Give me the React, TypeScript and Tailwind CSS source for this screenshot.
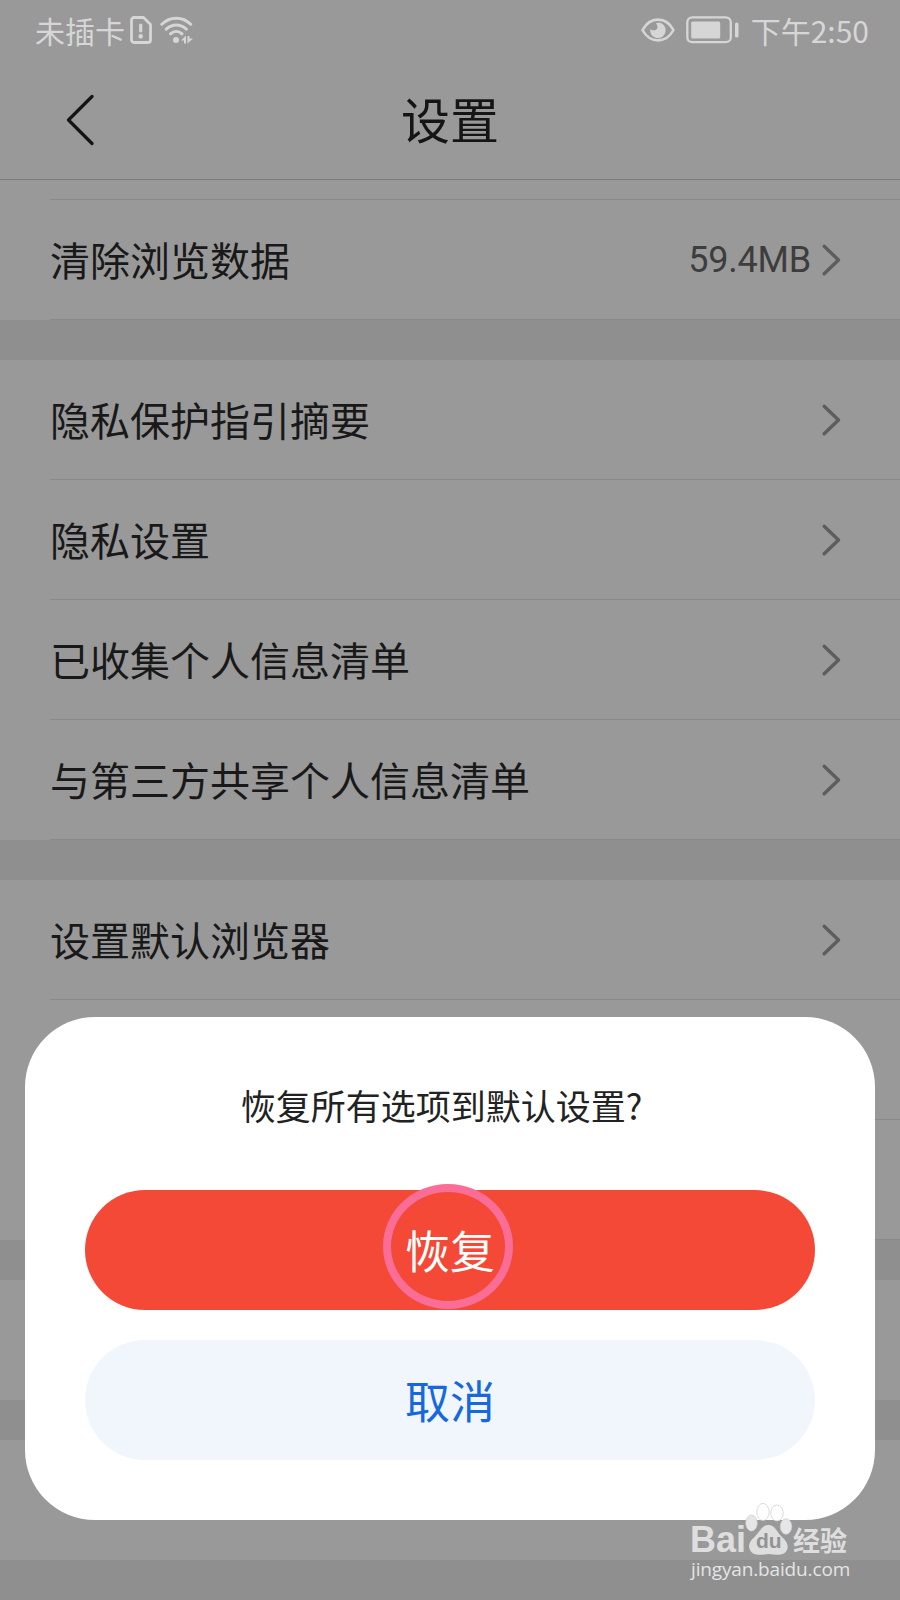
import React from "react";

const FONT = "font-['Noto_Sans_CJK_SC',sans-serif]";

function Chevron() {
  return (
    <svg className="h-8 w-5 shrink-0" viewBox="0 0 20 32" fill="none" stroke="#5d5d5d" strokeWidth="3.4" strokeLinecap="round" strokeLinejoin="round">
      <path d="M3.200 2.200 17.500 16 3.200 29.800" />
    </svg>
  );
}

function Row({ label, value, line = true }: { label?: string; value?: string; line?: boolean }) {
  return (
    <div className="flex h-[120px] bg-[#999999] pl-[50px]">
      <div className={line ? "flex flex-1 items-center justify-between border-b border-[#898989] pr-[59px]" : "flex flex-1 items-center justify-between pr-[59px]"}>
        <span className="pb-[2px] text-[40px] leading-[60px] text-[#191919]">{label}</span>
        {label && (
          <span className="flex items-center gap-[10px]">
            {value && <span className="pt-px font-['Roboto'] text-[36px] leading-[44px] tracking-[-0.2px] text-[#3d3d3d]">{value}</span>}
            <Chevron />
          </span>
        )}
      </div>
    </div>
  );
}

function Gap() {
  return <div className="h-10 bg-[#8f8f8f]" />;
}

function StatusBar() {
  return (
    <div className="flex h-[60px] items-center justify-between pl-[35px] pr-[31px] text-[30px] leading-[44px] text-[#d6d6d6]">
      <div className="flex items-center">
        <span className="w-[90px] whitespace-nowrap">未插卡</span>
        <svg className="ml-[5px] h-7 w-[22px]" viewBox="0 0 22 28" fill="none" stroke="currentColor" strokeWidth="2.8" strokeLinecap="round" strokeLinejoin="round">
          <path d="M4 1.500h9.500l7 7V24a2.500 2.500 0 0 1-2.500 2.500H4A2.500 2.500 0 0 1 1.500 24V4A2.500 2.500 0 0 1 4 1.500Z" />
          <path d="M10.700 9v6" strokeWidth="3.200" />
          <path d="M10.700 20.300v.1" strokeWidth="4.400" />
        </svg>
        <svg className="ml-2 h-7 w-[34px]" viewBox="0 0 34 28" fill="none" stroke="currentColor" strokeWidth="3" strokeLinecap="round">
          <path d="M1.800 8.200C10 .2 22.500 .2 30.700 8.200M6.300 13.200c6-5.500 14-5.500 20 0M10.500 17.800c3.500-3.200 8-3.200 11.500 0" />
          <circle cx="16" cy="24" r="3" fill="currentColor" stroke="none" />
          <path d="M21 24.500 26 19.500v8h-2v-3ZM27.500 20h2v2.500h3.500L27.500 27.500Z" fill="currentColor" stroke="none" />
        </svg>
      </div>
      <div className="flex items-center">
        <svg className="h-6 w-[34px]" viewBox="0 0 34 24" fill="none">
          <path d="M1.500 12C9-1.800 25-1.800 32.500 12 25 25.800 9 25.800 1.500 12Z" stroke="currentColor" strokeWidth="2.600" strokeLinejoin="round" />
          <path d="M17.500 4.500a7.800 7.800 0 1 1-8.300 6.500c1.800 2.200 6.800 1.800 7.300-1.500.2-1.800-.5-3-1.800-4Z" fill="currentColor" />
        </svg>
        <svg className="ml-[11px] h-7 w-[53px]" viewBox="0 0 53 28">
          <rect x="1.300" y="1.300" width="43.500" height="24.900" rx="5" fill="none" stroke="currentColor" strokeWidth="2.300" />
          <rect x="5.200" y="5.500" width="29" height="17" rx="1.500" fill="currentColor" />
          <rect x="49" y="6.500" width="3.500" height="15" rx="1.500" fill="currentColor" />
        </svg>
        <span className="ml-3 whitespace-nowrap">下午2:50</span>
      </div>
    </div>
  );
}

function Watermark() {
  return (
    <div className="absolute left-[690px] top-[1502px] w-[166px] text-[#dedede]">
      <div className="flex h-[54px] items-end">
        <span className="w-[55px] pb-px font-['Liberation_Sans'] text-[36px] font-bold leading-[31px]">Bai</span>
        <div className="relative h-[54px] w-[48px]">
          <svg className="absolute inset-0" width="48" height="54" viewBox="0 0 48 54" fill="#e6e6e6" stroke="#d0d0d0" strokeWidth=".8">
            <ellipse cx="6.500" cy="21" rx="5.700" ry="8" />
            <ellipse cx="18" cy="10" rx="6.200" ry="8.500" fill="#ffffff" />
            <ellipse cx="32" cy="11" rx="6.200" ry="8" fill="#ffffff" />
            <ellipse cx="41" cy="24.500" rx="5.700" ry="7.700" />
            <path d="M23.500 23c-7 0-8.500 7-14 12-5.500 4.500-6.500 9-4.500 13 3 6 10 5 18.500 4 8.500 1 15.500 2 18.500-4 2-4.500-.5-9-5-13-5.500-5-6.500-12-13.500-12Z" stroke="none" fill="#dedede" />
          </svg>
          <span className="absolute left-[11px] top-[27px] font-['Liberation_Sans'] text-[21px] font-bold leading-[24px] text-[#939393]">du</span>
        </div>
        <span className="whitespace-nowrap text-[27px] font-bold leading-[32px]">经验</span>
      </div>
      <div className="whitespace-nowrap pl-px pt-px font-['Open_Sans'] text-[19px] leading-[24px] tracking-[-0.15px] text-[#e4e4e4]">jingyan.baidu.com</div>
    </div>
  );
}

export default function App() {
  return (
    <div className={`relative h-[1600px] w-[900px] overflow-hidden bg-[#999999] ${FONT}`}>
      <StatusBar />
      <header className="grid h-[120px] grid-cols-[1fr_auto_1fr] items-center border-b border-[#7d7d7d] px-[66px]">
        <svg className="h-[52px] w-7" viewBox="0 0 28 52" fill="none" stroke="#151515" strokeWidth="3.200" strokeLinecap="round" strokeLinejoin="round">
          <path d="M26 2.500 2.500 26 26 49.500" />
        </svg>
        <h1 className="pb-1 text-[49px] leading-[60px] text-[#151515]">设置</h1>
        <span />
      </header>
      <main>
        <div className="ml-[50px] h-5 border-b border-[#898989]" />
        <Row label="清除浏览数据" value="59.4MB" />
        <Gap />
        <Row label="隐私保护指引摘要" />
        <Row label="隐私设置" />
        <Row label="已收集个人信息清单" />
        <Row label="与第三方共享个人信息清单" />
        <Gap />
        <Row label="设置默认浏览器" />
        <Row />
        <Row />
        <Gap />
        <Row line={false} />
        <Gap />
        <Row line={false} />
        <Gap />
      </main>
      <section className="absolute left-[25px] top-[1017px] flex h-[503px] w-[850px] flex-col rounded-[70px] bg-white px-[60px] pb-[60px] pt-[58px]">
        <h2 className="mb-[55px] h-[60px] pr-[17px] text-center text-[35px] leading-[60px] text-[#222222]">恢复所有选项到默认设置?</h2>
        <button className="relative h-[120px] shrink-0 rounded-full bg-[#f44936] text-[45px] leading-[60px] text-white">
          恢复
          <span className="absolute -top-[6px] left-[298px] h-[125px] w-[130px] rounded-[50%] border-[8px] border-[#f96d96]" />
        </button>
        <button className="mt-[30px] h-[120px] shrink-0 rounded-full bg-[#f1f6fd] text-[45px] leading-[60px] text-[#1668dc]">取消</button>
      </section>
      <Watermark />
    </div>
  );
}
